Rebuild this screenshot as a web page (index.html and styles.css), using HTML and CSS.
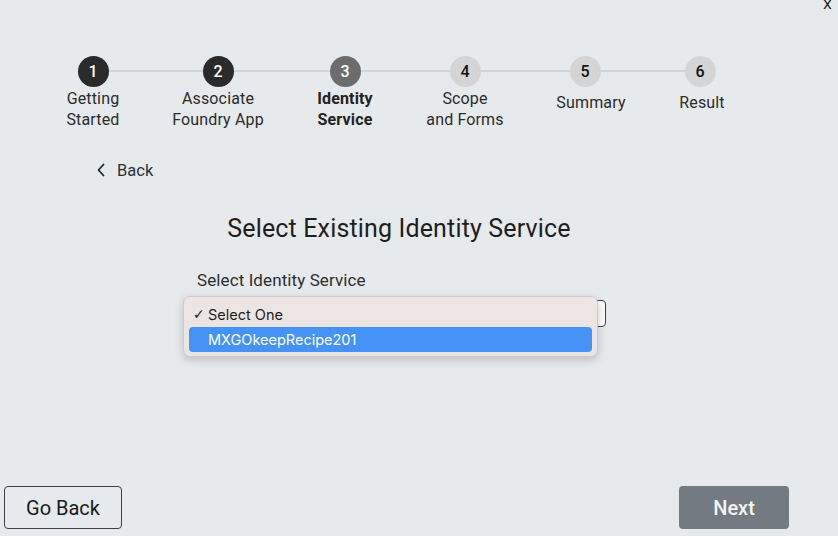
FILE: index.html
```html
<!DOCTYPE html>
<html>
<head>
<meta charset="utf-8">
<link rel="stylesheet" href="styles.css">
</head>
<body>
<div class="page">
  <span class="close">x</span>
  <div class="stepper">
    <div class="step s1"><div class="dot done">1</div><div class="lbl">Getting<br>Started</div></div>
    <div class="step s2"><div class="dot done">2</div><div class="lbl">Associate<br>Foundry App</div></div>
    <div class="step s3"><div class="dot current">3</div><div class="lbl bold">Identity<br>Service</div></div>
    <div class="step s4"><div class="dot">4</div><div class="lbl">Scope<br>and Forms</div></div>
    <div class="step s5"><div class="dot">5</div><div class="lbl single shift-lg">Summary</div></div>
    <div class="step s6"><div class="dot">6</div><div class="lbl single shift-sm">Result</div></div>
  </div>

  <div class="back">
    <svg class="chev" width="10" height="14" viewBox="0 0 10 14"><polyline points="7.5,1.5 2.5,7 7.5,12.5" fill="none" stroke="#1f262e" stroke-width="1.8" stroke-linecap="round" stroke-linejoin="round"/></svg>
    <span>Back</span>
  </div>

  <h1 class="title">Select Existing Identity Service</h1>

  <div class="field">
    <div class="field-label">Select Identity Service</div>
    <div class="select-wrap">
      <div class="select-box"></div>
      <div class="popup">
        <div class="opt"><span class="check">✓</span><span>Select One</span></div>
        <div class="opt hl"><span class="check"></span><span>MXGOkeepRecipe201</span></div>
      </div>
    </div>
  </div>

  <div class="footer">
    <button class="btn ghost">Go Back</button>
    <button class="btn primary">Next</button>
  </div>
</div>
</body>
</html>
```
FILE: styles.css
```css
html, body {
  margin: 0;
  padding: 0;
}
body {
  background: #e7eaed;
  font-family: Roboto, "Liberation Sans", sans-serif;
  color: #2a2a2a;
  width: 838px;
  height: 536px;
  overflow: hidden;
}
.page {
  position: relative;
  height: 536px;
  display: flex;
  flex-direction: column;
}
.close {
  position: absolute;
  right: 6px;
  top: -4px;
  font-family: "DejaVu Sans", sans-serif;
  font-size: 15px;
  line-height: 16px;
  color: #222;
}
.stepper {
  position: relative;
  display: flex;
  margin-left: 40px;
  padding-top: 56px;
}
.stepper::before {
  content: "";
  position: absolute;
  left: 53px;
  width: 607px;
  top: 70px;
  height: 2px;
  background: #d3d4d6;
}
.step {
  display: flex;
  flex-direction: column;
  align-items: center;
  position: relative;
}
.s1 { width: 106px; }
.s2 { width: 144px; }
.s3 { width: 110px; }
.s4 { width: 130px; }
.s5 { width: 110px; }
.s6 { width: 120px; }
.dot {
  width: 31px;
  height: 31px;
  border-radius: 50%;
  background: #d5d5d6;
  color: #111;
  font-size: 16px;
  font-weight: 500;
  display: flex;
  align-items: center;
  justify-content: center;
  position: relative;
}
.dot.done {
  background: #2a2a2a;
  color: #fff;
}
.dot.current {
  background: #6c6c6c;
  color: #fff;
}
.lbl {
  font-size: 16px;
  line-height: 21px;
  text-align: center;
  color: #2b2b2b;
  margin-top: 1px;
  white-space: nowrap;
  letter-spacing: 0.15px;
}
.lbl.bold {
  font-weight: 700;
  color: #222;
}
.lbl.single {
  padding-top: 4px;
}
.lbl.shift-lg {
  margin-left: 12px;
}
.lbl.shift-sm {
  margin-left: 4px;
}
.back {
  display: flex;
  align-items: center;
  gap: 11px;
  margin-left: 96px;
  margin-top: 30px;
  height: 20px;
  font-size: 16.5px;
  color: #2a323b;
}
.chev {
  display: block;
}
.title {
  margin: 34px 0 0 0;
  font-size: 25px;
  font-weight: 400;
  line-height: 30px;
  text-align: center;
  color: #1e1e1e;
  padding-right: 40px;
  letter-spacing: 0.15px;
}
.field {
  margin-top: 26px;
  margin-left: 187px;
  width: 419px;
}
.field-label {
  font-size: 17px;
  line-height: 20px;
  padding-left: 10px;
  color: #2e2e2e;
  letter-spacing: 0.1px;
}
.select-wrap {
  position: relative;
  margin-top: 10px;
}
.select-box {
  height: 25px;
  border: 1px solid #3b4148;
  border-radius: 4px;
  background: #fbfbfb;
}
.popup {
  position: absolute;
  left: -4px;
  top: -4px;
  width: 403px;
  padding: 4px 5px 4px 5px;
  background: #ede5e4;
  border: 1px solid #cfcaca;
  border-radius: 7px;
  box-shadow: 0 3px 10px rgba(0, 0, 0, 0.18);
  font-family: Inter, "Liberation Sans", sans-serif;
  font-size: 14.5px;
}
.opt {
  display: flex;
  align-items: center;
  height: 26px;
  color: #1c1c1c;
  padding-left: 4px;
  border-radius: 4px;
}
.opt.hl {
  height: 25px;
  background: #4593f7;
  color: #fff;
}
.check {
  width: 15px;
  font-family: "DejaVu Sans", sans-serif;
  font-size: 14px;
  font-weight: 700;
}
.footer {
  margin-top: auto;
  display: flex;
  justify-content: space-between;
  padding: 0 49px 7px 4px;
}
.btn {
  height: 43px;
  border-radius: 4px;
  font-family: Roboto, "Liberation Sans", sans-serif;
  font-size: 20px;
  cursor: pointer;
}
.btn.ghost {
  width: 118px;
  background: transparent;
  border: 1px solid #3a3f45;
  color: #1a1a1a;
}
.btn.primary {
  width: 110px;
  background: #737a81;
  border: none;
  color: #f3f4f5;
  font-weight: 500;
}
```
